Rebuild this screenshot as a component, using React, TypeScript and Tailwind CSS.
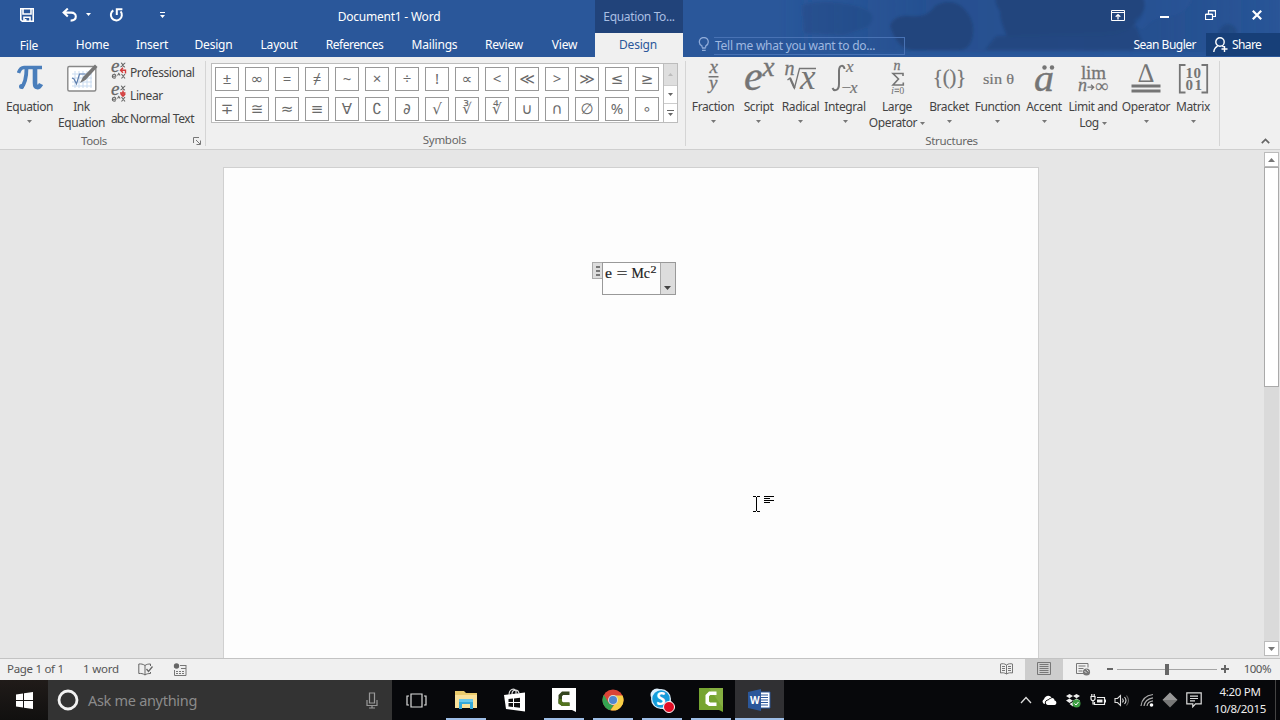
import React from "react";

type IconProps = { className?: string };

const serif = "'Liberation Serif', serif";

function Caret({ className = "" }: IconProps) {
  return (
    <svg width="5" height="3" viewBox="0 0 5 3" className={className} fill="currentColor">
      <path d="M0 0h5L2.5 3z" />
    </svg>
  );
}

/* ---------- Title bar ---------- */

function TitleArt() {
  return (
    <svg width="600" height="57" viewBox="680 0 600 57" className="absolute right-0 top-0">
      <defs>
        <linearGradient id="haze" x1="0" x2="1">
          <stop offset="0" stopColor="#234c8b" stopOpacity="0" />
          <stop offset=".3" stopColor="#234c8b" stopOpacity=".6" />
          <stop offset=".75" stopColor="#234c8b" stopOpacity=".7" />
          <stop offset="1" stopColor="#234c8b" stopOpacity=".2" />
        </linearGradient>
        <filter id="soft"><feGaussianBlur stdDeviation="1.5" /></filter>
      </defs>
      <g filter="url(#soft)">
        <path d="M780-5h500v57H780z" fill="url(#haze)" />
        <path d="M802 5q20-6 50 0t16 22l-24 8-40-2z" fill="#21477f" opacity=".4" />
        <path d="M890 26q4-12 20-10 18 2 25-10 14-8 26 0 14 12 12 28t-14 16h-48q-14-2-21-24z" fill="#20457d" />
        <path d="M996-5h146q8 18-8 30-10 10-32 11-50 0-94 2-8-16-8-27-6-8-4-16z" fill="#20457d" />
        <path d="M996 36q60-4 90-4t50-6l6 16-10 8H985z" fill="#21477f" opacity=".85" />
        <path d="M1144-4h48q-4 18-22 20t-24 10-12-6q14-8 10-24z" fill="#2a579a" opacity=".4" />
        <circle cx="1228" cy="33" r="9" fill="#21477f" opacity=".7" />
      </g>
    </svg>
  );
}

function SaveIcon() {
  return (
    <svg width="14" height="14" viewBox="0 0 14 14" fill="none" stroke="#fff" strokeWidth="1.6">
      <path d="M.8.8h12.4v12.4H2.3L.8 11.900zM3 1v5h8V1M4 13V9.300h6V13" />
      <path d="M5.500 11v2" strokeWidth="2" />
    </svg>
  );
}

function UndoIcon() {
  return (
    <svg width="15" height="14" viewBox="0 0 15 14" fill="none" stroke="#fff" strokeWidth="2.1">
      <path d="M5.800.600 1.600 4.600l4.200 4M2 4.600h7.200c3 0 4.600 1.600 4.600 3.900S12 12.600 8.600 12.600" />
    </svg>
  );
}

function RedoIcon() {
  return (
    <svg width="15" height="14" viewBox="0 0 15 14" fill="none" stroke="#fff" strokeWidth="2">
      <path d="M4.300 2.300A5.500 5.500 0 1 0 11.600 3.400" />
      <path d="M7.800 7V1.300H13.400" />
    </svg>
  );
}

function TitleBar() {
  return (
    <div className="flex h-[33px] text-white">
      <div className="flex w-[200px] items-start pl-5 pt-2">
        <SaveIcon />
        <div className="w-[28px]" />
        <UndoIcon />
        <Caret className="ml-[9px] mt-[5px]" />
        <div className="w-[18px]" />
        <RedoIcon />
        <svg width="7" height="6" viewBox="0 0 7 6" className="ml-[35px] mt-1" fill="#fff">
          <path d="M1 0h5v1H1zM1 3h5L3.500 6z" />
        </svg>
      </div>
      <div className="flex w-[378px] justify-center pt-[8px] text-[12px] leading-[17px] tracking-[-0.22px]">Document1 - Word</div>
      <div className="ml-[17px] flex w-[88px] justify-center bg-[#21437a] pt-[8px] text-[12px] leading-[17px] tracking-[-0.35px] text-[#a9bfe3]">
        Equation To...
      </div>
      <div className="flex flex-1 items-start justify-end pr-[18px]">
        <svg width="14" height="11" viewBox="0 0 14 11" className="mt-[10px]" fill="none" stroke="#fff">
          <path d="M.500.500h13v10H.500zM.500 2.500h13" />
          <path d="M7 9.500V5M4.700 6.800 7 4.600l2.300 2.200" strokeWidth="1.300" />
        </svg>
        <div className="ml-[35px] mt-4 h-[2px] w-[9px] bg-white" />
        <svg width="11" height="10" viewBox="0 0 11 10" className="ml-[36px] mt-[10px]" fill="none" stroke="#fff">
          <path d="M.500 4.500h7v5h-7zM.500 4h7M3.500 4V.500h7v6H8M3.500 1h7" strokeWidth="1.200" />
        </svg>
        <svg width="10" height="10" viewBox="0 0 10 10" className="ml-[36px] mt-[10px]" stroke="#fff" strokeWidth="2.200">
          <path d="m.800.800 8.400 8.400M9.200.800.800 9.200" />
        </svg>
      </div>
    </div>
  );
}

function TabStrip() {
  const tab = "flex shrink-0 justify-center whitespace-nowrap";
  return (
    <div className="flex h-6 text-[12px] leading-[24px] tracking-[-0.2px] text-white">
      <div className={`${tab} w-[58px] pt-px`}>File</div>
      <div className={`${tab} w-[69px]`}>Home</div>
      <div className={`${tab} w-[50px]`}>Insert</div>
      <div className={`${tab} w-[73px]`}>Design</div>
      <div className={`${tab} w-[58px]`}>Layout</div>
      <div className={`${tab} w-[93px] tracking-[-0.5px]`}>References</div>
      <div className={`${tab} w-[67px]`}>Mailings</div>
      <div className={`${tab} w-[72px]`}>Review</div>
      <div className={`${tab} w-[49px]`}>View</div>
      <div className={`${tab} ml-[6px] w-[88px] bg-[#f0f0f0] pr-[2px] text-[#2b579a]`}>Design</div>
      <div className="ml-[15px] mt-1 flex h-[18px] w-[207px] leading-[15px]">
        <svg width="12" height="15" viewBox="0 0 12 15" fill="none" stroke="#8fabd9" strokeWidth="1.300">
          <path d="M4 10.500V9C2.300 8 1.300 6.800 1.300 5a4.500 4.500 0 0 1 9 0c0 1.800-1 3-2.600 4v1.500M4 11h3.700M4 13.300h3.700" />
        </svg>
        <div className="ml-1 flex-1 border border-l-0 border-[#4872b4] pl-[1px] tracking-[-0.26px] text-[#9fb8e0]">
          Tell me what you want to do...
        </div>
      </div>
      <div className="flex flex-1 justify-end pr-[10px] tracking-[-0.5px]">Sean Bugler</div>
      <div className="flex h-[23px] w-[74px] items-center bg-[#173f78] pl-[7px]">
        <svg width="15" height="16" viewBox="0 0 15 16" fill="none" stroke="#fff" strokeWidth="1.400">
          <circle cx="7" cy="5" r="4.200" />
          <path d="M.800 15c.300-3 1.600-4.800 3.900-5.900M9.300 9l1.300 1M11.500 9v6M8.500 12h6" />
        </svg>
        <span className="ml-[4px] tracking-[-0.6px]">Share</span>
      </div>
    </div>
  );
}

/* ---------- Ribbon ---------- */

function ScriptIcon({ linear }: { linear?: boolean }) {
  return (
    <svg width="16" height="18" viewBox="0 0 16 18" fontFamily={serif} fill="#666" className="overflow-visible">
      <text x="0" y="10" fontSize="19" fontStyle="italic" stroke="#666" strokeWidth=".3">e</text>
      <path d="m1.500 14.200h3.300c0-2.800-3.500-2.600-3.500 0 0 2.200 2.200 2.400 3.400 1.300M6.500 13.500l1.300-2 1.300 2M10.500 12l3.500 4.500M14 12l-3.500 4.500M10 1.200c1.800-.6 1.600 4.600 4 3.600M14.300 1c-1.800 0-2.600 4-4.800 3.800" fill="none" stroke="#666" strokeWidth="1.100" />
      {linear ? (
        <path d="M12 5.500v5.500M9 8h5.500M9.800 9l2.200 2.200L14.200 9" stroke="#d23b3b" strokeWidth="1.400" fill="none" />
      ) : (
        <path d="M14.500 11.500V8.300H9.500M12 5.800 9.500 8.300l2.500 2.500" stroke="#d23b3b" strokeWidth="1.400" fill="none" />
      )}
    </svg>
  );
}

function ToolsGroup() {
  return (
    <div className="flex w-[205px] flex-col">
      <div className="flex h-[75px]">
        <div className="flex w-[59px] flex-col items-center pt-[8px]">
          <svg width="26" height="25" viewBox="0 0 26 25" fill="none" stroke="#4a7ebb">
            <path d="M1.500 8C3 3.500 4.500 2.500 7 2.500h18" strokeWidth="3.600" />
            <path d="M9.500 3c0 10-1.500 16-5.500 20" strokeWidth="3.800" />
            <circle cx="4.500" cy="21.500" r="2.500" fill="#4a7ebb" stroke="none" />
            <path d="M18 3v15c0 5 3.500 5.500 6 1" strokeWidth="4.600" />
          </svg>
          <div className="mt-[9px] leading-[16px]">Equation</div>
          <Caret className="mt-[5px] text-[#777]" />
        </div>
        <div className="flex w-[45px] flex-col items-center pt-[6px]">
          <svg width="32" height="30" viewBox="0 0 32 30">
            <rect x="1.800" y="3.500" width="28" height="24.500" rx="1.500" fill="#fff" stroke="#888" strokeWidth="1.400" />
            <path d="M6 11h20M6 15h20M6 19h20M6 23h20M9 8v17M13 8v17M17 8v17M21 8v17M25 8v17" stroke="#c9dbf0" />
            <path d="m6 15 2 1 2.500 5 3-10h6" fill="none" stroke="#5f7fae" strokeWidth="1.200" />
            <path d="m14 20 3-6L29 1.500l2.500 2.500-12 13z" fill="#777" />
          </svg>
          <div className="mt-[6px] text-center leading-[16px]">Ink<br />Equation</div>
        </div>
        <div className="flex flex-col pl-[7px] pt-[5px]">
          <div className="flex h-[23px] items-start"><ScriptIcon /><span className="ml-[3px] mt-[2px] leading-[17px]">Professional</span></div>
          <div className="flex h-[23px] items-start"><ScriptIcon linear /><span className="ml-[3px] mt-[2px] leading-[17px]">Linear</span></div>
          <div className="flex h-[23px] items-start leading-[17px]">
            <span className="mt-[2px] w-[19px] tracking-[-0.9px]">abc</span><span className="mt-[2px]">Normal Text</span>
          </div>
        </div>
      </div>
      <div className="mt-px flex items-start justify-between pl-[81px] pr-1 text-[11.500px] leading-[18px] text-[#666]">
        <span>Tools</span>
        <svg width="8" height="8" viewBox="0 0 8 8" className="mt-[5px]" fill="none" stroke="#777">
          <path d="M.500 6V.500H6M3 3l4 4M7.500 3.500v4h-4" />
        </svg>
      </div>
    </div>
  );
}

const symbolsTop = ["±", "∞", "=", "≠", "~", "×", "÷", "!", "∝", "<", "≪", ">", "≫", "≤", "≥"];
const symbolsBottom = ["∓", "≅", "≈", "≡", "∀", "∁", "∂", "√", "∛", "∜", "∪", "∩", "∅", "%", "∘"];

function SymbolCell({ ch }: { ch: string }) {
  return (
    <div className="flex h-6 w-6 items-center justify-center border border-[#999] bg-white pb-px text-[15px] leading-none tracking-normal text-[#6a6a6a] [font-family:'Noto_Sans','DejaVu_Sans',sans-serif]">
      {ch}
    </div>
  );
}

function SymbolsGroup() {
  return (
    <div className="flex w-[479px] flex-col">
      <div className="ml-[5px] mt-[6px] flex h-[62px] w-[467px] border border-[#bcbcbc] bg-white">
        <div className="grid w-[452px] grid-cols-[repeat(15,24px)] content-start gap-[6px] pl-[3px] pt-[3px]">
          {symbolsTop.map((s) => <SymbolCell key={s} ch={s} />)}
          {symbolsBottom.map((s) => <SymbolCell key={s} ch={s} />)}
        </div>
        <div className="flex w-[14px] shrink-0 flex-col border-l border-[#bcbcbc] text-[#666]">
          <div className="flex h-[21px] items-center justify-center bg-[#dedede] text-[#bbb]"><Caret className="rotate-180" /></div>
          <div className="flex h-[19px] items-center justify-center border-y border-[#ccc]"><Caret /></div>
          <div className="flex flex-1 flex-col items-center justify-center gap-[2px]"><div className="h-px w-[7px] bg-[#666]" /><Caret /></div>
        </div>
      </div>
      <div className="mt-[8px] pr-[2px] text-center text-[11.500px] leading-[18px] tracking-[-0.3px] text-[#666]">Symbols</div>
    </div>
  );
}

function Glyph({ w, children }: { w: number; children: React.ReactNode }) {
  return (
    <svg width={w} height="36" viewBox={`0 0 ${w} 36`} fontFamily={serif} fill="#757575" letterSpacing="0" className="shrink-0 overflow-visible">
      {children}
    </svg>
  );
}

function StructureButton({ width, label, second, children }: { width: string; label: string; second?: string; children: React.ReactNode }) {
  return (
    <div className={`flex shrink-0 flex-col items-center whitespace-nowrap pt-[4px] leading-[16px] ${width}`}>
      {children}
      <div className="mt-[2px]">{label}</div>
      {second ? (
        <div className="flex items-center">{second}<Caret className="ml-[3px] text-[#777]" /></div>
      ) : (
        <Caret className="mt-[5px] text-[#777]" />
      )}
    </div>
  );
}

function StructuresGroup() {
  return (
    <div className="flex w-[533px] flex-col">
      <div className="flex h-[75px] pl-1">
        <StructureButton width="w-[46px]" label="Fraction">
          <Glyph w={12}>
            <text x="2.500" y="11.500" fontSize="19" fontStyle="italic" stroke="#757575" strokeWidth=".3">x</text>
            <path d="M1.500 15h10v1.500h-10z" />
            <text x="2" y="28" fontSize="19" fontStyle="italic" stroke="#757575" strokeWidth=".3">y</text>
          </Glyph>
        </StructureButton>
        <StructureButton width="w-[45px]" label="Script">
          <Glyph w={30}>
            <text x="0" y="29" fontSize="42" fontStyle="italic" stroke="#757575" strokeWidth=".4">e</text>
            <text x="18.500" y="14.500" fontSize="27" fontStyle="italic" stroke="#757575" strokeWidth=".4">x</text>
          </Glyph>
        </StructureButton>
        <StructureButton width="w-[39px]" label="Radical">
          <Glyph w={32}>
            <text x="-.500" y="14" fontSize="20" fontStyle="italic" stroke="#757575" strokeWidth=".3">n</text>
            <path d="m2.500 19 2.500-2 4.500 10L14.500 7.500h16.500" fill="none" stroke="#757575" strokeWidth="1.300" />
            <path d="m5 17 4.500 10" stroke="#757575" strokeWidth="2.200" />
            <text x="15" y="28" fontSize="35" fontStyle="italic">x</text>
          </Glyph>
        </StructureButton>
        <StructureButton width="w-[50px]" label="Integral">
          <Glyph w={26}>
            <path d="M12.500 8c-.5-4.500-5.500-4.500-5.500 2v13c0 7-5 7.500-6.500 4" fill="none" stroke="#757575" strokeWidth="2" />
            <text x="14" y="11" fontSize="17" fontStyle="italic" stroke="#757575" strokeWidth=".2">x</text>
            <text x="8.500" y="32" fontSize="17" fontStyle="italic" textLength="17" stroke="#757575" strokeWidth=".2">−x</text>
          </Glyph>
        </StructureButton>
        <StructureButton width="w-[54px]" label="Large" second="Operator">
          <Glyph w={14}>
            <text x="3.500" y="9" fontSize="14" fontStyle="italic" stroke="#757575" strokeWidth=".3">n</text>
            <path d="M13 15v-2.500H3l5.500 5.500-5.500 6h10.300V21.500" fill="none" stroke="#757575" strokeWidth="1.600" />
            <text x="1" y="33" fontSize="11" fontStyle="italic">i</text>
            <path d="M4.500 28.200h4.500M4.500 30.600h4.500" stroke="#757575" />
            <text x="9.300" y="33" fontSize="10">0</text>
          </Glyph>
        </StructureButton>
        <StructureButton width="w-[50px]" label="Bracket">
          <Glyph w={34}>
            <text x="1" y="23" fontSize="22" textLength="33" lengthAdjust="spacingAndGlyphs" stroke="#757575" strokeWidth=".3">{"{()}"}</text>
          </Glyph>
        </StructureButton>
        <StructureButton width="w-[47px]" label="Function">
          <Glyph w={32}>
            <text x="1" y="23" fontSize="15.500" textLength="31" lengthAdjust="spacingAndGlyphs" stroke="#757575" strokeWidth=".2">sin θ</text>
          </Glyph>
        </StructureButton>
        <StructureButton width="w-[46px]" label="Accent">
          <Glyph w={20}>
            <text x="0" y="29.500" fontSize="37" fontStyle="italic" textLength="20" lengthAdjust="spacingAndGlyphs" stroke="#757575" strokeWidth=".4">a</text>
            <circle cx="10.500" cy="6.500" r="2.200" /><circle cx="18" cy="6.500" r="2.200" />
          </Glyph>
        </StructureButton>
        <StructureButton width="w-[52px]" label="Limit and" second="Log">
          <Glyph w={30}>
            <text x="3" y="17.500" fontSize="19" textLength="25" stroke="#757575" strokeWidth=".3">lim</text>
            <text x="0" y="30" fontSize="18" fontStyle="italic" stroke="#757575" strokeWidth=".3">n</text>
            <path d="M9.500 26.200h6M13 23.700l2.700 2.500-2.700 2.500" fill="none" stroke="#757575" strokeWidth="1.300" />
            <text x="17" y="31" fontSize="18" textLength="13" lengthAdjust="spacingAndGlyphs" stroke="#757575" strokeWidth=".2">∞</text>
          </Glyph>
        </StructureButton>
        <StructureButton width="w-[54px]" label="Operator">
          <Glyph w={30}>
            <text x="7" y="21" fontSize="27" textLength="16" lengthAdjust="spacingAndGlyphs">∆</text>
            <path d="M.500 23.500h29v3H.500zM.500 28.500h29v3H.500z" />
          </Glyph>
        </StructureButton>
        <StructureButton width="w-[40px]" label="Matrix">
          <Glyph w={30}>
            <path d="M7.500 4H1.800v27.500h5.700M23.500 4h5.700v27.500h-5.700" fill="none" stroke="#757575" strokeWidth="1.800" />
            <text x="7.500" y="17" fontSize="15" fontWeight="bold">1</text><text x="15.500" y="17" fontSize="15" fontWeight="bold">0</text>
            <text x="7.500" y="29" fontSize="15" fontWeight="bold">0</text><text x="16.500" y="29" fontSize="15" fontWeight="bold">1</text>
          </Glyph>
        </StructureButton>
      </div>
      <div className="mt-px pr-[2px] text-center text-[11.500px] leading-[18px] tracking-[-0.3px] text-[#666]">Structures</div>
    </div>
  );
}

function Separator() {
  return <div className="mb-[3px] mt-1 w-px shrink-0 bg-[#d5d5d5]" />;
}

function Ribbon() {
  return (
    <div className="flex h-[93px] border-b border-[#cfcfcf] bg-[#f0f0f0] text-[12px] tracking-[-0.4px] text-[#444]">
      <ToolsGroup />
      <Separator />
      <SymbolsGroup />
      <Separator />
      <StructuresGroup />
      <Separator />
      <div className="flex flex-1 items-end justify-end pb-[5px] pr-[10px]">
        <svg width="9" height="6" viewBox="0 0 9 6" fill="none" stroke="#666" strokeWidth="1.700"><path d="M.800 5.200 4.500 1.500l3.700 3.700" /></svg>
      </div>
    </div>
  );
}

/* ---------- Document ---------- */

function EquationBox() {
  return (
    <div className="flex items-start">
      <div className="flex h-[17px] w-[10px] flex-col items-center justify-center gap-[2px] border border-r-0 border-[#aaa] bg-[#ddd] pl-px">
        <div className="h-[2px] w-1 bg-[#777]" />
        <div className="h-[2px] w-1 bg-[#777]" />
        <div className="h-[2px] w-1 bg-[#777]" />
      </div>
      <div className="flex h-[33px] w-[74px] border border-[#999] bg-[#fdfdfd]">
        <div className="flex w-[57px] whitespace-nowrap pl-[2px] pt-[1px] text-[#222]">
          <svg width="54" height="20" viewBox="0 0 54 20" fontFamily={serif} fill="#222" stroke="#222" strokeWidth=".2">
            <text x="0" y="14" fontSize="15.500" textLength="7" lengthAdjust="spacingAndGlyphs">e</text>
            <text x="11.500" y="14" fontSize="15" textLength="11" lengthAdjust="spacingAndGlyphs">=</text>
            <text x="26.500" y="14" fontSize="15.500" textLength="18.500" lengthAdjust="spacingAndGlyphs">Mc</text>
            <text x="45.500" y="8.500" fontSize="11" textLength="6" lengthAdjust="spacingAndGlyphs">2</text>
          </svg>
        </div>
        <div className="flex flex-1 items-end justify-center border-l border-[#aaa] bg-[#ddd] pb-[4px] pr-px text-[#444]">
          <svg width="7" height="4" viewBox="0 0 7 4" fill="currentColor"><path d="M0 0h7L3.500 4z" /></svg>
        </div>
      </div>
    </div>
  );
}

function DocumentArea() {
  return (
    <div className="flex h-[508px] bg-[#e6e6e6]">
      <div className="relative ml-[223px] mt-[17px] w-[816px] border border-b-0 border-[#d0d0d0] bg-[#fdfdfd] pl-[368px] pt-[94px]">
        <EquationBox />
        <svg width="21" height="16" viewBox="0 0 21 16" className="absolute left-[529px] top-[328px]" fill="none" stroke="#000" shapeRendering="crispEdges">
          <path d="M0 .500h3M4 .500h3M3.500 1v14M0 15.500h3M4 15.500h3M11 .500h10M11 2.500h6M11 4.500h10M11 6.500h6" />
        </svg>
      </div>
      <div className="ml-[225px] mt-[2px] flex w-[15px] flex-col text-[#666]">
        <div className="flex h-[15px] items-center justify-center border border-[#bbb] bg-white"><svg width="7" height="4" viewBox="0 0 7 4"><path d="M0 4h7L3.500 0z" fill="#777" /></svg></div>
        <div className="h-[220px] border border-[#aaa] bg-white" />
        <div className="h-[254px] bg-[#dadada]" />
        <div className="flex h-[15px] items-center justify-center border border-[#bbb] bg-white"><svg width="7" height="4" viewBox="0 0 7 4"><path d="M0 0h7L3.500 4z" fill="#777" /></svg></div>
      </div>
    </div>
  );
}

function StatusBar() {
  return (
    <div className="flex h-[22px] items-center border-t border-[#c3c3c3] bg-[#f0f0f0] pb-px text-[11.500px] text-[#555]">
      <div className="w-[76px] pl-[7px] tracking-[-0.3px]">Page 1 of 1</div>
      <div className="w-[62px] pl-[7px] tracking-[-0.2px]">1 word</div>
      <svg width="15" height="13" viewBox="0 0 15 13" fill="none" stroke="#666">
        <path d="M7 2.500C5 1 3 .800.800 1v9.500c2.200-.2 4.200 0 6.200 1.500zM7 2.500C8.500 1.300 10 1 12.500 1v2M7 12c1.500-1.200 3-1.500 5.500-1.500V9" />
        <path d="m8.500 6 2 2.500 4-5" strokeWidth="1.300" />
      </svg>
      <svg width="14" height="13" viewBox="0 0 14 13" className="ml-[20px]" fill="none" stroke="#777">
        <circle cx="3.500" cy="3" r="2.700" fill="#666" stroke="none" />
        <path d="M7 2.500h6M1.500 7v5.500h11.500V2M8 5.500h5" />
        <path d="M3 8.500h8M3 10.500h8" strokeDasharray="2 1" />
      </svg>
      <div className="flex-1" />
      <svg width="13" height="12" viewBox="0 0 13 12" className="mr-[12px]" fill="none" stroke="#777">
        <path d="M6.500 2C4.500.500 2.500.500.500 1v9c2-.4 4-.4 6 1 2-1.400 4-1.400 6-1V1c-2-.5-4-.5-6 1zM6.500 2v9M2 3.500h3M2 5.500h3M2 7.500h3M8 3.500h3M8 5.500h3M8 7.500h3" />
      </svg>
      <div className="-mb-px flex h-[21px] w-[38px] items-center justify-center bg-[#cdcdcd] pb-[2px]">
        <svg width="14" height="13" viewBox="0 0 14 13" fill="none" stroke="#777"><path d="M.500.500h13v12H.500zM2.500 2.500h9M2.500 4.500h9M2.500 6.500h9M2.500 8.500h9M2.500 10.500h9" /></svg>
      </div>
      <svg width="15" height="13" viewBox="0 0 15 13" className="ml-[13px]" fill="none" stroke="#777">
        <path d="M8 10.500H.500V.500h11.500v4M2.500 3h7M2.500 5.500h5M2.500 8h4" />
        <circle cx="10.500" cy="9" r="3.600" fill="#777" stroke="none" /><path d="m8.500 8 2 2M10.500 6.500l2 2" stroke="#ddd" />
      </svg>
      <div className="ml-[16px] h-[2px] w-[6px] bg-[#666]" />
      <div className="ml-[4px] flex w-[100px] items-center">
        <div className="h-px w-[48px] bg-[#a5a5a5]" />
        <div className="h-[11px] w-1 bg-[#666]" />
        <div className="h-px flex-1 bg-[#a5a5a5]" />
      </div>
      <svg width="8" height="8" viewBox="0 0 8 8" className="ml-[4px]" stroke="#666" strokeWidth="2"><path d="M4 0v8M0 4h8" /></svg>
      <div className="w-[51px] pr-[9px] text-right tracking-[-0.5px]">100%</div>
    </div>
  );
}

/* ---------- Taskbar ---------- */

function TaskItem({ active, open, children }: { active?: boolean; open?: boolean; children: React.ReactNode }) {
  return (
    <div className={`flex w-[49px] flex-col items-center ${active ? "bg-[#303033]" : ""}`}>
      <div className="flex h-[37px] items-center justify-center pt-[3px]">{children}</div>
      <div className={`mt-px h-[2px] ${active ? "w-full" : "w-10"} ${open || active ? "bg-[#9dbde6]" : ""}`} />
    </div>
  );
}

function Camtasia({ light }: { light?: boolean }) {
  return (
    <svg width="24" height="24" viewBox="0 0 24 24">
      <path d="M0 0h24v24l-4-2H0z" fill={light ? "#fff" : "#76a431"} />
      {!light && <path d="M10 0h14v20z" fill="#8fb84c" opacity=".6" />}
      <path d="M17.500 7V3.500H10L6.500 7v8.500l3.500 2.500h7.500v-3.500h-6.300l-1.200-1V8.300L11.200 7z" fill={light ? "#34451f" : "#fff"} />
      {light && <path d="M6.500 11v4.500L10 18h7.500v-3.500h-6.300l-1.200-1V11z" fill="#52731e" />}
    </svg>
  );
}

function Taskbar() {
  return (
    <div className="flex h-10 bg-[#07080b] text-white">
      <div className="flex w-12 items-center justify-center bg-gradient-to-b from-[#201b19] to-[#11100f]">
        <svg width="17" height="17" viewBox="0 0 17 17" fill="#fff"><path d="m0 2.400 7-1V8H0zM8 1.200 17 0v8H8zM0 9h7v6.600l-7-1zM8 9h9v8l-9-1.200z" /></svg>
      </div>
      <div className="flex w-[344px] items-center bg-[#333] pl-[9px] text-[14.500px] text-[#8b8b8b]">
        <svg width="22" height="22" viewBox="0 0 22 22"><circle cx="11" cy="11" r="9" fill="none" stroke="#f2f2f2" strokeWidth="2.800" /></svg>
        <span className="ml-[9px] mt-px tracking-[-0.3px]">Ask me anything</span>
        <svg width="12" height="17" viewBox="0 0 12 17" className="ml-auto mr-[14px]" fill="none" stroke="#999" strokeWidth="1.200"><path d="M3.500 1h5v10h-5zM1 8v5.500h10V8M6 13.500V16M3 16h6" /></svg>
      </div>
      <TaskItem>
        <svg width="21" height="15" viewBox="0 0 21 15" fill="none" stroke="#ddd" strokeWidth="1.200"><path d="M5 1h11v13H5zM3 3H1v9h2M18 3h2v9h-2" /></svg>
      </TaskItem>
      <TaskItem open>
        <svg width="22" height="20" viewBox="0 0 22 20"><path d="M0 1h9l2 2h11v15H0z" fill="#eacb6c" /><path d="M0 5h22v13H0z" fill="#f9e19a" /><path d="M4 9h14v10h-3v-5H7v5H4z" fill="#35a9d9" /><path d="M4 9h14v3H4z" fill="#68c8eb" /></svg>
      </TaskItem>
      <TaskItem>
        <svg width="22" height="24" viewBox="0 0 22 24"><path d="m0 7 21-2.500V23.500L2 21z" fill="#fff" /><path d="M5 7C5 1 10-.500 12 3v3M8 6c0-5 6-5 7-1" fill="none" stroke="#ddd" strokeWidth="1.200" /><path d="m4.500 11 4.500-.5V14H4.500zM10 10.400l6-.6V14h-6zM4.500 15H9v4l-4.500-.5zM10 15h6v4.700l-6-.6z" fill="#111" /></svg>
      </TaskItem>
      <TaskItem open><Camtasia light /></TaskItem>
      <TaskItem open>
        <svg width="22" height="22" viewBox="0 0 22 22"><circle cx="11" cy="11" r="10.500" fill="#db4437" /><path d="M1.900 5.800 7 14.500l4.500 2-3.300 4.800A10.500 10.500 0 0 1 1.900 5.800z" fill="#35a451" /><path d="M11 6.500h9.500A10.500 10.500 0 0 1 8.500 21.200l5.500-8z" fill="#f7cf46" /><circle cx="11" cy="11" r="5" fill="#ddd" /><circle cx="11" cy="11" r="4" fill="#4f86ce" /></svg>
      </TaskItem>
      <TaskItem open>
        <svg width="26" height="26" viewBox="0 0 26 26"><circle cx="8" cy="8" r="6.500" fill="#dceffc" /><circle cx="17" cy="17" r="6" fill="#dceffc" /><circle cx="12" cy="12" r="10" fill="#dceffc" /><circle cx="12" cy="12" r="8.700" fill="#159cda" /><text x="7.300" y="18" fontSize="17" fontWeight="bold" fill="#fff" fontFamily="Noto Sans, sans-serif">S</text><circle cx="20" cy="20" r="5.500" fill="#e30d25" stroke="#fff" /></svg>
      </TaskItem>
      <TaskItem open><Camtasia /></TaskItem>
      <TaskItem active>
        <svg width="23" height="22" viewBox="0 0 23 22"><path d="M12 3h10v16H12z" fill="#fff" stroke="#2b579a" /><path d="M13 6h7M13 8.500h7M13 11h7M13 13.500h7M13 16h7" stroke="#2b579a" strokeWidth="1.200" /><path d="m0 3 13-3v22L0 19z" fill="#2b579a" /><text x="2" y="15" fontSize="10" fontWeight="bold" fill="#fff" fontFamily="Noto Sans, sans-serif">W</text></svg>
      </TaskItem>
      <div className="flex flex-1 items-center justify-end">
        <svg width="12" height="8" viewBox="0 0 12 8" fill="none" stroke="#ddd" strokeWidth="1.300"><path d="m1 7 5-5.500L11 7" /></svg>
        <svg width="15" height="11" viewBox="0 0 15 11" className="ml-[10px]"><path d="M2.500 9A2.500 2.500 0 0 1 2 4.300C3 .500 8-.500 9.500 3c2-.3 3 1 3 2.500C15 6 15 9.500 12.500 10H6C3 9.500 3.500 6 6 6" fill="#fff" /><path d="M3.500 9C2.500 6 5 4.800 6.300 5c.7-1.400 2-1.800 3-1.500" fill="none" stroke="#111" /></svg>
        <svg width="15" height="15" viewBox="0 0 15 15" className="ml-[9px]"><path d="m3.500 1 3.500 2-3.500 2.300L0 3zM10.500 1 14 3l-3.500 2.300L7 3zM3.500 5.500 7 7.800 3.500 10 0 7.500zM10.500 5.500 14 7.500 10.500 10 7 7.800zM3.500 11 7 9l2 1-2 3.500z" fill="#eee" /><circle cx="10.500" cy="10.500" r="4" fill="#3d9e43" /><path d="m8.500 10.500 1.500 1.500 2.500-3" stroke="#fff" fill="none" /></svg>
        <svg width="16" height="13" viewBox="0 0 16 13" className="ml-[9px]" fill="none" stroke="#eee" strokeWidth="1.200"><path d="M7 3.500h7.500v7H4.500V8" /><path d="M1 2.500v2.200C1 6 2 6.500 3 6.500s2-.5 2-1.800V2.500zM1.800 2V0M4.200 2V0M3 6.500V10h2" /><path d="M7 5.500h5.500v3H7z" fill="#eee" stroke="none" /><path d="M15.500 5.500v3" /></svg>
        <svg width="16" height="13" viewBox="0 0 16 13" className="ml-[8px]" fill="none" stroke="#ddd" strokeWidth="1.100"><path d="M1 4.500h2.500l3-3v10l-3-3H1zM8.500 4.500q1.500 2 0 4M10.500 3q3 3.500 0 7" /><path d="M12.500 1.500q4 5 0 10" stroke="#666" /></svg>
        <svg width="14" height="14" viewBox="0 0 14 14" className="ml-[10px]" fill="none" stroke="#aaa" strokeWidth="1.200"><path d="M1 13Q2 3 13 1.500M4 13Q5 6 13 4.800M7 13q.5-4.500 6-5.200" /><circle cx="11.500" cy="12" r="1.800" fill="#fff" stroke="none" /></svg>
        <svg width="16" height="16" viewBox="0 0 16 16" className="ml-[8px]"><path d="m8 .500 7.500 7.500L8 15.500.500 8z" fill="#777" /><path d="m8 .500 7.500 7.500H.500z" fill="#aaa" opacity=".65" /></svg>
        <svg width="16" height="16" viewBox="0 0 16 16" className="ml-[8px]" fill="none" stroke="#ddd" strokeWidth="1.200"><path d="M.800.800h14.400v11H9.500l-2.700 3v-3h-6zM4 4.200h8M4 6.500h8M4 8.800h5" /></svg>
        <div className="ml-[11px] w-[54px] whitespace-nowrap text-center text-[11.500px] leading-[17px] tracking-[-0.3px] text-[#eee]">4:20 PM<br />10/8/2015</div>
        <div className="ml-[8px] mr-1 h-full w-px bg-[#444]" />
      </div>
    </div>
  );
}

export default function App() {
  return (
    <div className="flex h-[720px] w-[1280px] flex-col overflow-hidden [font-family:'Noto_Sans','DejaVu_Sans',sans-serif]">
      <div className="relative h-[57px] bg-[#2a579a]">
        <TitleArt />
        <div className="relative"><TitleBar /><TabStrip /></div>
      </div>
      <Ribbon />
      <DocumentArea />
      <StatusBar />
      <Taskbar />
    </div>
  );
}
